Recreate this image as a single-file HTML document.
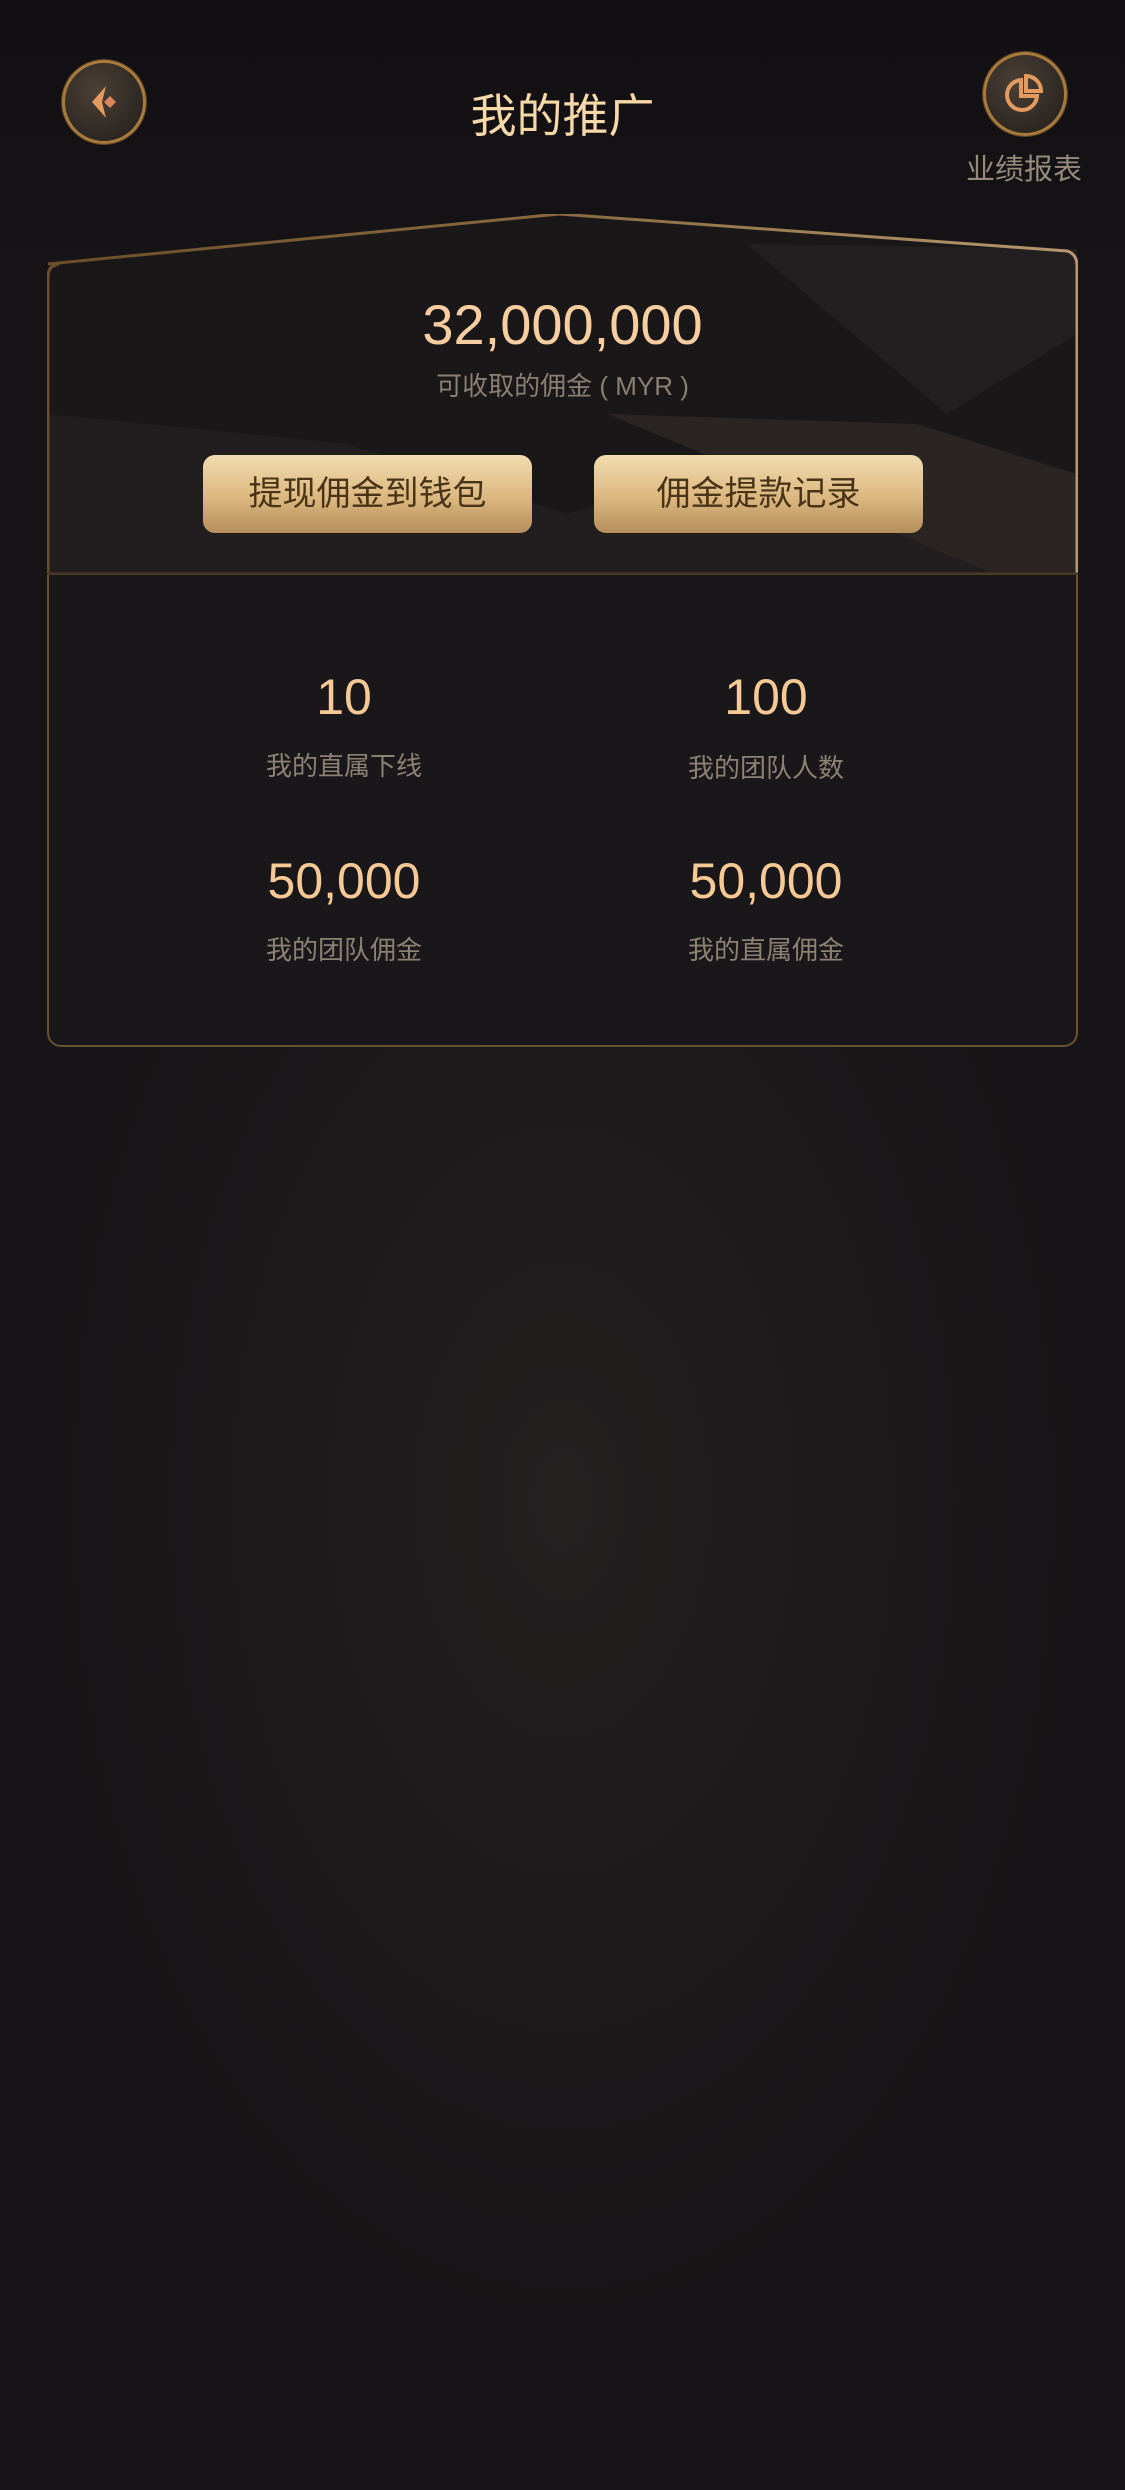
<!DOCTYPE html>
<html><head><meta charset="utf-8"><style>
html,body{margin:0;padding:0}
body{width:1125px;height:2490px;position:relative;overflow:hidden;font-family:"Liberation Sans","Noto Sans CJK SC",sans-serif;
background:radial-gradient(ellipse 560px 900px at 563px 1500px,#242020 0%,#1c191b 55%,#161416 100%);}
.top{position:absolute;left:0;top:0;width:1125px;height:260px;background:linear-gradient(#121013,#141215 80%,rgba(20,18,21,0));}
.circ{position:absolute;width:78px;height:78px;border-radius:50%;border:3px solid #a87a3c;background:radial-gradient(circle at 40% 35%,#4a4036,#221d1a);box-shadow:0 0 0 1px #5c4525}
.t{position:absolute;left:0;width:1125px;text-align:center}
.card{position:absolute;left:47px;top:570px;width:1031px;height:477px;border:2px solid #6a5233;border-top:none;border-radius:0 0 14px 14px;background:#19171a;box-sizing:border-box}
.upper{position:absolute;left:47px;top:214px;width:1031px;height:361px;}
.btn{position:absolute;top:455px;height:78px;width:329px;border-radius:12px;background:linear-gradient(#f1dcb0,#dcb77f 55%,#b58e5c);color:#4a3418;font-size:34px;line-height:78px;text-align:center}
.num{position:absolute;width:400px;text-align:center;color:#f6c995;font-size:50px}
.lab{position:absolute;width:400px;text-align:center;color:#8c8173;font-size:26px}
</style></head><body>
<div class="top"></div>
<div class="circ" style="left:62px;top:60px"></div>
<svg style="position:absolute;left:82px;top:80px" width="44" height="44" viewBox="0 0 44 44"><path d="M24 6 L10 22 L24 38 L20 22 Z" fill="#e29a5e"/><path d="M28 16 L22 22 L28 28 L34 22 Z" fill="#d9875a"/></svg>
<div class="circ" style="left:983px;top:52px"></div>
<svg style="position:absolute;left:1000px;top:70px" width="48" height="48" viewBox="0 0 48 48"><path d="M21 10 A15 15 0 1 0 37 26 H21 Z" fill="none" stroke="#e29a5e" stroke-width="4"/><path d="M26 6 V21 H41 A15 15 0 0 0 26 6 Z" fill="none" stroke="#e29a5e" stroke-width="4"/></svg>
<div class="t" style="top:80px;font-size:46px;color:#f7d9a8">我的推广</div>
<div style="position:absolute;left:944px;width:160px;text-align:center;top:146px;font-size:29px;color:#958a7c">业绩报表</div>
<div class="card"></div>
<svg class="upper" viewBox="0 0 1031 361" width="1031" height="361" style="position:absolute">
<defs><linearGradient id="g" x1="0" x2="1"><stop offset="0" stop-color="#6b4e2a"/><stop offset=".5" stop-color="#8a6a40"/><stop offset="1" stop-color="#b89870"/></linearGradient></defs>
<path d="M1 50 L515 0 L1030 35 L1030 361 L1 361 Z" fill="#1a1719"/>
<path d="M1 200 L300 230 L520 300 L750 240 L1030 270 L1030 361 L1 361 Z" fill="#221e1f"/>
<path d="M700 30 L1030 35 L1030 120 L900 200 Z" fill="#231f20"/>
<path d="M560 200 L870 210 L1030 260 L1030 361 L950 361 Z" fill="#2a2422"/>
<path d="M1 50 L512 0 L1020 37 Q1030 40 1030 52 L1030 361" fill="none" stroke="url(#g)" stroke-width="3"/>
<path d="M1 361 L1 62 Q1 52 12 50" fill="none" stroke="#6b4e2a" stroke-width="3"/>
<line x1="0" y1="360" x2="1031" y2="360" stroke="#4a3a24" stroke-width="3"/>
</svg>
<div class="t" style="top:292px;font-size:56px;color:#f8cda0">32,000,000</div>
<div class="t" style="top:366px;font-size:26px;color:#8a7f72">可收取的佣金 ( MYR )</div>
<div class="btn" style="left:203px">提现佣金到钱包</div>
<div class="btn" style="left:594px">佣金提款记录</div>
<div class="num" style="left:144px;top:668px">10</div>
<div class="num" style="left:566px;top:668px">100</div>
<div class="lab" style="left:144px;top:746px">我的直属下线</div>
<div class="lab" style="left:566px;top:748px">我的团队人数</div>
<div class="num" style="left:144px;top:852px">50,000</div>
<div class="num" style="left:566px;top:852px">50,000</div>
<div class="lab" style="left:144px;top:930px">我的团队佣金</div>
<div class="lab" style="left:566px;top:930px">我的直属佣金</div>
</body></html>
